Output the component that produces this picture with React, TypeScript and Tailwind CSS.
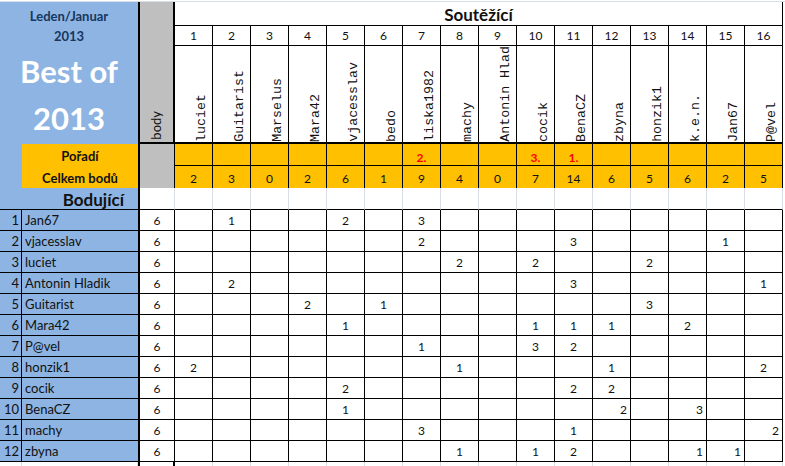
const contestants = [
  "luciet",
  "Guitarist",
  "Marselus",
  "Mara42",
  "vjacesslav",
  "bedo",
  "liska1982",
  "machy",
  "Antonin Hladik",
  "cocik",
  "BenaCZ",
  "zbyna",
  "honzik1",
  "k.e.n.",
  "Jan67",
  "P@vel",
];

const totals = [2, 3, 0, 2, 6, 1, 9, 4, 0, 7, 14, 6, 5, 6, 2, 5];
const ranks: Record<number, string> = { 6: "2.", 9: "3.", 10: "1." };

// "r" suffix = number left right-aligned, as typed into the sheet
const scorers: { name: string; pts: Record<number, string> }[] = [
  { name: "Jan67", pts: { 1: "1", 4: "2", 6: "3" } },
  { name: "vjacesslav", pts: { 6: "2", 10: "3", 14: "1" } },
  { name: "luciet", pts: { 7: "2", 9: "2", 12: "2" } },
  { name: "Antonin Hladik", pts: { 1: "2", 10: "3", 15: "1" } },
  { name: "Guitarist", pts: { 3: "2", 5: "1", 12: "3" } },
  { name: "Mara42", pts: { 4: "1", 9: "1", 10: "1", 11: "1", 13: "2" } },
  { name: "P@vel", pts: { 6: "1", 9: "3", 10: "2" } },
  { name: "honzik1", pts: { 0: "2", 7: "1", 11: "1", 15: "2" } },
  { name: "cocik", pts: { 4: "2", 10: "2", 11: "2" } },
  { name: "BenaCZ", pts: { 4: "1", 11: "2r", 13: "3r" } },
  { name: "machy", pts: { 6: "3", 10: "1", 15: "2r" } },
  { name: "zbyna", pts: { 7: "1", 9: "1", 10: "2", 13: "1r", 14: "1r" } },
];

const cols = Array.from({ length: 16 }, (_, i) => i);

export default function App() {
  return (
    <div className="h-[466px] w-[785px] overflow-hidden bg-white font-['Lato',sans-serif] text-[#111]">
      <div className="h-[2px] border-b border-[#d9dde4]" />
      <div className="grid grid-cols-[22px_116px_37px_repeat(16,38px)_2px] grid-rows-[24px_20px_98px_22px_22px_22px_repeat(12,21px)_4px]">
        {/* title block */}
        <div className="col-span-2 row-span-3 flex flex-col items-center bg-[#8db4e2] pt-[4px] font-bold">
          <div className="text-[13px] leading-[20px] text-[#17375e]">Leden/Januar</div>
          <div className="text-[13px] leading-[20px] text-[#17375e]">2013</div>
          <div className="mt-[2px] text-[31px] leading-[47px] text-white">Best of</div>
          <div className="text-[31px] leading-[47px] text-white">2013</div>
        </div>
        <div className="row-span-3 flex items-end border-b-2 border-l-2 border-r-2 border-black bg-[#bfbfbf] pb-[2px] pl-[9px]">
          <span className="rotate-180 whitespace-nowrap text-[13px] leading-[14px] [writing-mode:vertical-rl]">
            body
          </span>
        </div>
        <div className="col-span-16 flex items-end justify-center border-b border-r border-black pb-[2px] text-[17px] font-bold leading-none">
          Soutěžící
        </div>
        <div />

        {/* column numbers */}
        {cols.map((c) => (
          <div
            key={`n${c}`}
            className="flex items-end justify-center border-b border-r border-black pb-[3px] text-[12px] leading-none"
          >
            {c + 1}
          </div>
        ))}
        <div />

        {/* contestant names */}
        {cols.map((c) => (
          <div
            key={`c${c}`}
            className="flex items-end overflow-hidden border-b-2 border-r border-black pl-[20px]"
          >
            <span className="rotate-180 whitespace-nowrap font-['Liberation_Mono',monospace] text-[13.3px] leading-[14px] [writing-mode:vertical-rl]">
              {contestants[c]}
            </span>
          </div>
        ))}
        <div />

        {/* Pořadí */}
        <div className="bg-[#8db4e2]" />
        <div className="flex items-end justify-center bg-[#ffc000] pb-[3px] text-[13px] font-bold leading-none">
          Pořadí
        </div>
        <div className="row-span-2 border-l-2 border-r border-black bg-[#bfbfbf]" />
        {cols.map((c) => (
          <div
            key={`r${c}`}
            className="flex items-end justify-center border-b border-r border-black bg-[#ffc000] pb-[1px] text-[12px] font-bold leading-none text-[#ff0000]"
          >
            {ranks[c]}
          </div>
        ))}
        <div />

        {/* Celkem bodů */}
        <div className="bg-[#8db4e2]" />
        <div className="flex items-end justify-center bg-[#ffc000] pb-[3px] text-[13px] font-bold leading-none">
          Celkem bodů
        </div>
        {cols.map((c) => (
          <div
            key={`t${c}`}
            className="flex items-end justify-center border-r border-black bg-[#ffc000] pb-[3px] text-[12px] leading-none"
          >
            {totals[c]}
          </div>
        ))}
        <div />

        {/* Bodující */}
        <div className="col-span-2 flex items-end justify-end border-b border-black bg-[#8db4e2] pb-[1px] pr-[14px] text-[17px] font-bold leading-none">
          Bodující
        </div>
        <div className="border-b border-l-2 border-r border-black border-r-[#d9dde4]" />
        {cols.map((c) => (
          <div key={`b${c}`} className="border-b border-r border-black border-r-[#d9dde4]" />
        ))}
        <div />

        {/* scorer rows */}
        {scorers.map((r, i) => (
          <div key={r.name} className="contents">
            <div className="flex items-end justify-end border-b border-r border-black bg-[#8db4e2] pb-[3px] pr-[2px] text-[13px] leading-none">
              {i + 1}
            </div>
            <div className="flex items-end border-b border-black bg-[#8db4e2] pb-[3px] pl-[3px] text-[13px] leading-none">
              {r.name}
            </div>
            <div className="flex items-end justify-center border-b border-l-2 border-r border-black pb-[3px] text-[12px] leading-none">
              6
            </div>
            {cols.map((c) => {
              const v = r.pts[c];
              const right = v?.endsWith("r");
              return (
                <div
                  key={c}
                  className={
                    right
                      ? "flex items-end justify-end border-b border-r border-black pb-[3px] pr-[3px] text-[12px] leading-none"
                      : "flex items-end justify-center border-b border-r border-black pb-[3px] text-[12px] leading-none"
                  }
                >
                  {v?.replace("r", "")}
                </div>
              );
            })}
            <div />
          </div>
        ))}

        {/* next, empty row cut off by the window */}
        <div className="border-r border-[#d9dde4]" />
        <div className="border-r border-[#d9dde4]" />
        <div className="border-l-2 border-r-2 border-black" />
        {cols.map((c) => (
          <div key={`e${c}`} className="border-r border-[#d9dde4]" />
        ))}
        <div />
      </div>
    </div>
  );
}
